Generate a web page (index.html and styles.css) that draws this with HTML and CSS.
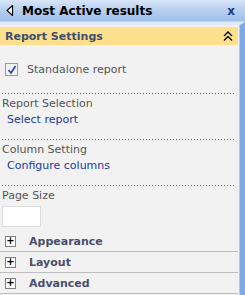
FILE: index.html
```html
<!DOCTYPE html>
<html lang="en">

<head>
    <meta charset="UTF-8">
    <title>Most Active results</title>
    <link rel="stylesheet" href="styles.css">
</head>

<body>
    <div class="toolpane">
        <div class="pane-title">
            <svg class="back-icon" width="8" height="11" viewBox="0 0 8 11">
                <path d="M6.5 0.5 L1 5.5 L6.5 10.5 Z" fill="#fff" stroke="#000" stroke-width="1.2" />
            </svg>
            <span class="title-text">Most Active results</span>
            <span class="close">x</span>
        </div>
        <div class="pane-body">
            <div class="section-head">
                <span>Report Settings</span>
                <svg class="collapse-icon" width="12" height="12" viewBox="0 0 12 12">
                    <path d="M2 6 L6 2 L10 6 M2 10.5 L6 6.5 L10 10.5" fill="none" stroke="#000" stroke-width="1.3" />
                </svg>
            </div>

            <div class="group first">
                <label class="check-row">
                    <span class="checkbox">
                        <svg width="10" height="10" viewBox="0 0 10 10">
                            <path d="M1.5 5 L4 8 L8.5 1" fill="none" stroke="#2e4fb0" stroke-width="1.8" />
                        </svg>
                    </span>
                    Standalone report
                </label>
            </div>

            <div class="group">
                <div class="field-label">Report Selection</div>
                <a class="field-link" href="#">Select report</a>
            </div>

            <div class="group">
                <div class="field-label">Column Setting</div>
                <a class="field-link" href="#">Configure columns</a>
            </div>

            <div class="group last">
                <div class="field-label">Page Size</div>
                <input class="page-size" type="text">
            </div>

            <div class="fold">
                <span class="plus">+</span>
                <span>Appearance</span>
            </div>
            <div class="fold">
                <span class="plus">+</span>
                <span>Layout</span>
            </div>
            <div class="fold">
                <span class="plus">+</span>
                <span>Advanced</span>
            </div>
        </div>
    </div>
</body>

</html>
```

FILE: styles.css
```css
/* tool pane */
body {
    margin: 0;
    padding: 0;
    font-family: 'DejaVu Sans', Verdana, sans-serif;
    background-color: #f2f2f2;
    overflow: hidden;
}

.toolpane {
    width: 245px;
    height: 295px;
    overflow: hidden;
}

.pane-title {
    height: 21px;
    display: flex;
    align-items: center;
    padding: 0 10px 0 6px;
    background: linear-gradient(to bottom, #d7e5f8 0%, #b9d0f1 45%, #9ebfec 100%);
    border-bottom: 1px solid #c5d6ee;
}

.back-icon {
    margin-right: 8px;
}

.title-text {
    flex: 1;
    font-size: 12px;
    font-weight: bold;
    color: #000;
}

.close {
    font-size: 12px;
    font-weight: bold;
    color: #1f3a8a;
}

.pane-body {
    height: 273px;
    background-color: #f2f2f2;
    border-top: 3px solid #e2e8f1;
    border-right: 5px solid #7fa9e6;
    box-shadow: inset -1px 0 0 #aecaf1;
    padding: 2px 2px 0 0;
}

.section-head {
    height: 18px;
    display: flex;
    align-items: center;
    justify-content: space-between;
    padding: 0 4px 0 5px;
    background-color: #fedf8c;
    font-size: 11px;
    font-weight: bold;
    color: #3b4e70;
}

/* dotted separators: 1px dot every 3px */
.group {
    padding: 3px 2px 13px 2px;
    margin-right: 2px;
    background-image: linear-gradient(to right, #3f62d2 1px, transparent 1px);
    background-size: 3px 1px;
    background-repeat: repeat-x;
    background-position: 2px bottom;
}

.group.first {
    padding: 18px 4px 18px 5px;
}

.group.last {
    background-image: none;
    padding-bottom: 4px;
}

.check-row {
    display: flex;
    align-items: center;
    height: 13px;
    font-size: 11px;
    color: #555;
}

.checkbox {
    width: 11px;
    height: 11px;
    border: 1px solid #9a9a9a;
    background-color: #f4f4f4;
    margin-right: 9px;
    display: flex;
    align-items: center;
    justify-content: center;
}

.field-label {
    font-size: 11px;
    color: #555;
    line-height: 14px;
}

.field-link {
    display: block;
    margin: 2px 0 0 5px;
    font-size: 11px;
    line-height: 14px;
    color: #1a3aa8;
    text-decoration: none;
}

.page-size {
    display: block;
    width: 39px;
    height: 21px;
    margin-top: 3px;
    padding: 0;
    border: 1px solid #dcdcdc;
    background-color: #fff;
    box-sizing: border-box;
}

.fold {
    height: 20px;
    display: flex;
    align-items: center;
    border-bottom: 1px solid #bdbdbd;
    font-size: 11px;
    font-weight: bold;
    color: #4a4e6a;
}

.plus {
    width: 9px;
    height: 9px;
    border: 1px solid #808080;
    background-color: #fff;
    margin: 0 13px 0 5px;
    font-size: 10px;
    line-height: 8px;
    text-align: center;
    color: #000;
    font-weight: bold;
}
```
